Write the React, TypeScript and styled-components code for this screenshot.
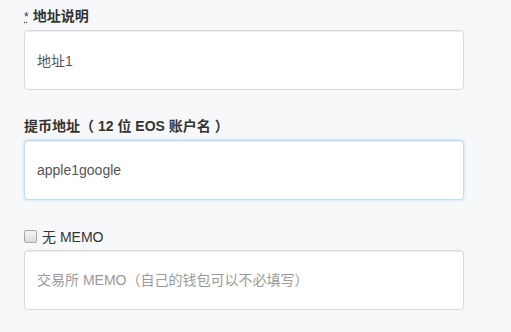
import React from "react";
import styled, { createGlobalStyle } from "styled-components";

const GlobalStyle = createGlobalStyle`
  html, body {
    margin: 0;
    padding: 0;
    background: #f7f8fa;
  }
  body {
    font-family: "Liberation Sans", Arial, "Noto Sans CJK SC", sans-serif;
    color: #333;
  }
`;

const Form = styled.form`
  display: flex;
  flex-direction: column;
  width: 440px;
  padding: 6px 0 0 24px;
`;

const Group = styled.div`
  display: flex;
  flex-direction: column;
  margin-bottom: 26px;
`;

const Label = styled.label`
  display: block;
  height: 20px;
  line-height: 20px;
  margin-bottom: 4px;
  font-size: 14px;
  font-weight: bold;
  color: #333;
`;

const Paren = styled.span<{ $close?: boolean }>`
  padding: ${(p) => (p.$close ? "0 0 0 4px" : "0 4px 0 0")};
`;

const Required = styled.abbr`
  font-size: 12px;
  font-weight: normal;
  text-decoration: underline dotted;
  margin-right: 4px;
  cursor: help;
`;

const CheckRow = styled.label`
  display: flex;
  align-items: center;
  height: 20px;
  margin-bottom: 4px;
  font-size: 14px;
  color: #333;
`;

const Check = styled.input`
  appearance: none;
  box-sizing: border-box;
  width: 13px;
  height: 13px;
  margin: 0 5px 0 0;
  border: 1px solid #a9a9a9;
  border-radius: 2px;
  background: linear-gradient(#f4f4f4, #dcdcdc);
`;

const Field = styled.input<{ $focus?: boolean }>`
  box-sizing: border-box;
  width: 100%;
  height: 60px;
  padding: 0 12px;
  font-family: "Liberation Sans", Arial, "Noto Sans CJK SC", sans-serif;
  font-size: 14px;
  color: #555;
  background: #fff;
  border: 1px solid ${(p) => (p.$focus ? "#c4dcf2" : "#d9d9d9")};
  border-radius: 4px;
  box-shadow: ${(p) =>
    p.$focus
      ? "inset 0 1px 1px rgba(0,0,0,.075), 0 0 3px rgba(102,175,233,.45)"
      : "inset 0 1px 1px rgba(0,0,0,.075)"};
  outline: none;
  &::placeholder {
    color: #999;
  }
`;

const App: React.FC = () => {
  return (
    <>
      <GlobalStyle />
      <Form>
        <Group>
          <Label>
            <Required title="required">*</Required>地址说明
          </Label>
          <Field defaultValue="地址1" />
        </Group>
        <Group>
          <Label>
            提币地址<Paren>（</Paren>12 位 EOS 账户名<Paren $close>）</Paren>
          </Label>
          <Field $focus defaultValue="apple1google" />
        </Group>
        <Group>
          <CheckRow>
            <Check type="checkbox" />无 MEMO
          </CheckRow>
          <Field placeholder="交易所 MEMO（自己的钱包可以不必填写）" />
        </Group>
      </Form>
    </>
  );
};

export default App;
